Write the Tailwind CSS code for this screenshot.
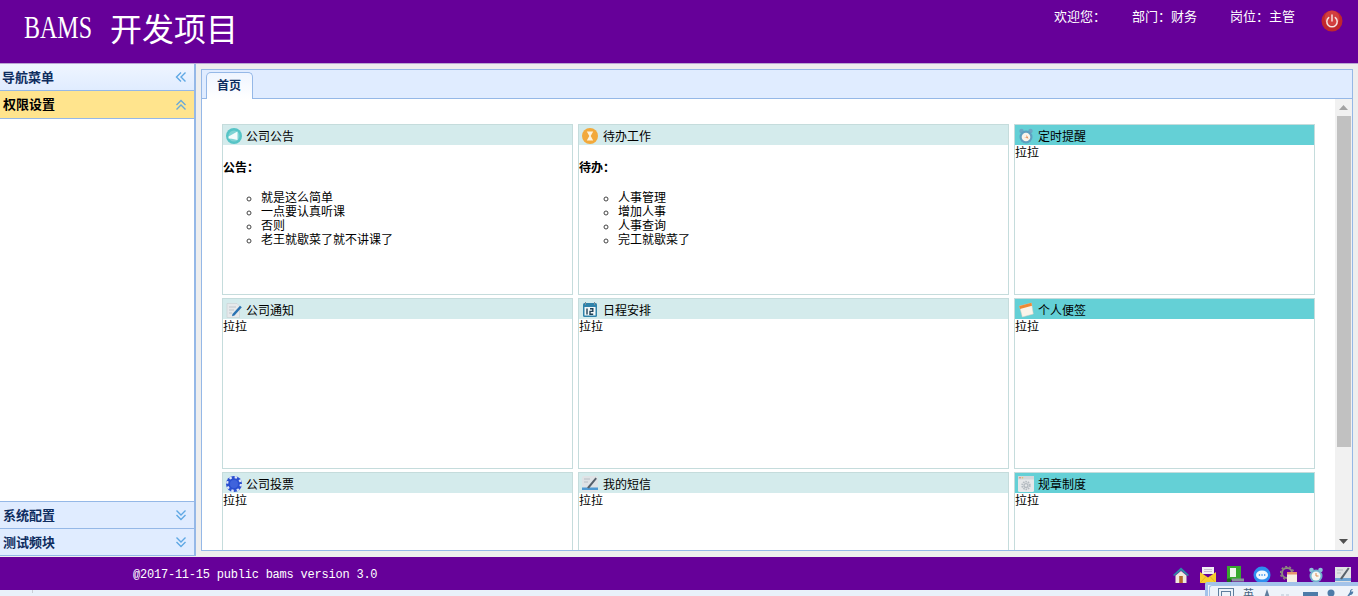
<!DOCTYPE html>
<html lang="zh">
<head>
<meta charset="utf-8">
<title>BAMS 开发项目</title>
<script src="https://cdn.jsdelivr.net/npm/@tailwindcss/browser@4"></script>
</head>
<body class="h-[596px] w-[1358px] overflow-hidden bg-[#eeeeee] font-['Liberation_Sans','Noto_Sans_CJK_SC',sans-serif] text-[12px] leading-[14px] text-black">
<div class="flex h-[596px] flex-col overflow-hidden">

  <!-- header -->
  <header class="relative flex h-[64px] shrink-0 items-start border-b border-[#b9a6d3] bg-[#660099] text-white">
    <h1 class="ml-[24px] mt-[8px] flex items-center text-[32px] leading-[38px] font-normal">
      <span class="inline-block w-[68px] origin-left scale-x-[0.75] font-['Liberation_Serif',serif]">BAMS</span>
      <span class="ml-[18px] font-['Noto_Sans_CJK_SC',sans-serif] font-normal">开发项目</span>
    </h1>
    <div class="ml-auto mt-[9px] flex text-[13px] leading-[15px]">
      <span class="w-[78px]">欢迎您：</span>
      <span class="w-[98px]">部门：财务</span>
      <span class="w-[91px]">岗位：主管</span>
    </div>
    <svg class="mr-[15px] mt-[10px] h-[22px] w-[22px]" viewBox="0 0 22 22">
      <circle cx="11" cy="11" r="10.5" fill="#c0272d"/>
      <circle cx="11" cy="8" r="7.5" fill="#e0524f" opacity=".55"/>
      <path d="M7.7 7.6a5.2 5.2 0 1 0 6.6 0" fill="none" stroke="#f6e3e0" stroke-width="1.5" stroke-linecap="round"/>
      <path d="M11 5v6" stroke="#f6e3e0" stroke-width="1.5" stroke-linecap="round"/>
    </svg>
  </header>

  <!-- middle -->
  <div class="flex h-[493px] shrink-0">
    <!-- sidebar -->
    <aside class="flex h-[492px] w-[196px] shrink-0 flex-col border-r-2 border-[#95b8e7] bg-white font-bold text-[13px] leading-[15px]">
      <div class="flex h-[27px] shrink-0 items-center justify-between border-b border-[#95b8e7] bg-gradient-to-b from-[#eff5ff] to-[#e0ecff] pl-[2px] pr-[7px] text-[#0e2d5f]">
        <span>导航菜单</span>
        <svg class="h-[12px] w-[12px]" viewBox="0 0 12 12" fill="none" stroke="#5fa8e4" stroke-width="1.4"><path d="M6 1.5 1.5 6 6 10.5M10.5 1.5 6 6l4.5 4.5"/></svg>
      </div>
      <div class="flex h-[28px] shrink-0 items-center justify-between border-b border-[#95b8e7] bg-[#ffe48d] pl-[3px] pr-[7px] text-black">
        <span>权限设置</span>
        <svg class="h-[12px] w-[12px]" viewBox="0 0 12 12" fill="none" stroke="#6aa9d8" stroke-width="1.4"><path d="M1.5 6 6 1.5 10.5 6M1.5 10.5 6 6l4.5 4.5"/></svg>
      </div>
      <div class="flex-1 bg-white"></div>
      <div class="flex h-[28px] shrink-0 items-center justify-between border-y border-[#95b8e7] bg-[#e0ecff] pl-[3px] pr-[7px] text-[#0e2d5f]">
        <span>系统配置</span>
        <svg class="h-[12px] w-[12px]" viewBox="0 0 12 12" fill="none" stroke="#5fa8e4" stroke-width="1.4"><path d="M1.5 1.5 6 6l4.5-4.5M1.5 6 6 10.5 10.5 6"/></svg>
      </div>
      <div class="flex h-[27px] shrink-0 items-center justify-between border-b border-[#95b8e7] bg-[#e0ecff] pl-[3px] pr-[7px] text-[#0e2d5f]">
        <span>测试频块</span>
        <svg class="h-[12px] w-[12px]" viewBox="0 0 12 12" fill="none" stroke="#5fa8e4" stroke-width="1.4"><path d="M1.5 1.5 6 6l4.5-4.5M1.5 6 6 10.5 10.5 6"/></svg>
      </div>
    </aside>

    <!-- main panel -->
    <main class="ml-[5px] mt-[5px] flex h-[482px] w-[1152px] flex-col border border-[#95b8e7] bg-white">
      <div class="flex h-[29px] shrink-0 items-end border-b border-[#95b8e7] bg-[#e0ecff] pl-[4px]">
        <div class="relative top-px flex h-[27px] w-[47px] items-center justify-center rounded-t-[5px] border border-b-0 border-[#95b8e7] bg-gradient-to-b from-[#eff5ff] to-white pr-[1px] text-[12px] font-bold text-[#0e2d5f]">首页</div>
      </div>
      <div class="flex min-h-0 flex-1">
        <div class="min-w-0 flex-1 overflow-hidden pl-[20px] pt-[25px]">
          <div class="grid grid-cols-[351px_431px_301px] grid-rows-[171px_171px_171px] gap-x-[5px] gap-y-[3px]">

            <section class="border border-[#c5dcdc]">
              <div class="flex h-[20px] items-center gap-[4px] bg-[#d4ebec] pl-[3px] pt-[2px]">
                <svg class="h-[16px] w-[16px]" viewBox="0 0 16 16"><circle cx="8" cy="8" r="8" fill="#56c4c6"/><circle cx="8" cy="8" r="5.500" fill="#7fd3d4"/><path d="M2.500 8.500 11.500 3.500v8.500L5.800 10.800 2.500 10.500z" fill="#f4fbfb"/></svg>
                <span class="pt-[1px]">公司公告</span>
              </div>
              <p class="mt-[16px] font-bold">公告：</p>
              <ul class="mt-[16px] list-[circle] pl-[38px] marker:text-[#444]">
                <li>就是这么简单</li><li>一点要认真听课</li><li>否则</li><li>老王就歇菜了就不讲课了</li>
              </ul>
            </section>

            <section class="border border-[#c5dcdc]">
              <div class="flex h-[20px] items-center gap-[5px] bg-[#d4ebec] pl-[3px] pt-[2px]">
                <svg class="h-[16px] w-[16px]" viewBox="0 0 16 16"><circle cx="8" cy="8" r="8" fill="#f2a93b"/><path d="M4.800 3.500h6.400L8.700 8l2.500 4.500H4.800L7.300 8z" fill="#fdf3dc"/></svg>
                <span class="pt-[1px]">待办工作</span>
              </div>
              <p class="mt-[16px] font-bold">待办：</p>
              <ul class="mt-[16px] list-[circle] pl-[39px] marker:text-[#444]">
                <li>人事管理</li><li>增加人事</li><li>人事查询</li><li>完工就歇菜了</li>
              </ul>
            </section>

            <section class="border border-[#c5dcdc]">
              <div class="flex h-[20px] items-center gap-[4px] bg-[#64d0d6] pl-[3px] pt-[2px]">
                <svg class="h-[16px] w-[16px]" viewBox="0 0 16 16"><circle cx="3.500" cy="3" r="2.200" fill="#6ea6c4"/><circle cx="12.500" cy="3" r="2.200" fill="#6ea6c4"/><circle cx="8" cy="9" r="6.500" fill="#5f9fc0"/><circle cx="8" cy="9" r="4.300" fill="#fbf3ea"/><path d="M6 9.500h2.500V7l2 3.500z" fill="#e08a50"/></svg>
                <span class="pt-[1px]">定时提醒</span>
              </div>
              <p class="pt-[1px]">拉拉</p>
            </section>

            <section class="border border-[#c5dcdc]">
              <div class="flex h-[20px] items-center gap-[4px] bg-[#d4ebec] pl-[3px] pt-[2px]">
                <svg class="h-[16px] w-[16px]" viewBox="0 0 16 16"><path d="M1 1.500h10l2.500 2.500v11.500H1z" fill="#e6e9eb" stroke="#c9ced2" stroke-width=".6"/><path d="M3 5h7M3 8h5M3 11h3" stroke="#bfc5ca"/><path d="M6.500 12 14 3.800l1.800 1.500L8.500 13.500 6 14.300z" fill="#2a72b2"/></svg>
                <span class="pt-[1px]">公司通知</span>
              </div>
              <p class="pt-[1px]">拉拉</p>
            </section>

            <section class="border border-[#c5dcdc]">
              <div class="flex h-[20px] items-center gap-[5px] bg-[#d4ebec] pl-[3px] pt-[2px]">
                <svg class="h-[16px] w-[16px]" viewBox="0 0 16 16"><rect x="1" y="1" width="14" height="14" rx="1.500" fill="#2f83ab"/><rect x="2.500" y="5" width="11" height="8.500" fill="#f3f7f8"/><path d="M3.500 0v3M12.500 0v3" stroke="#7c8f99"/><path d="M5 6.500v6M8 6.800h2.800v2.600H8v2.800h3.200" fill="none" stroke="#1e3f55" stroke-width="1.400"/></svg>
                <span class="pt-[1px]">日程安排</span>
              </div>
              <p class="pt-[1px]">拉拉</p>
            </section>

            <section class="border border-[#c5dcdc]">
              <div class="flex h-[20px] items-center gap-[4px] bg-[#64d0d6] pl-[3px] pt-[2px]">
                <svg class="h-[16px] w-[16px]" viewBox="0 0 16 16"><path d="m1.500 4 12-3 1.800 11-11 3z" fill="#fbf4ea" stroke="#d9d0c2" stroke-width=".5"/><path d="m1.200 4 12.300-3.200.5 3L2 7z" fill="#ee8a35"/></svg>
                <span class="pt-[1px]">个人便签</span>
              </div>
              <p class="pt-[1px]">拉拉</p>
            </section>

            <section class="border border-[#c5dcdc]">
              <div class="flex h-[20px] items-center gap-[4px] bg-[#d4ebec] pl-[3px] pt-[2px]">
                <svg class="h-[16px] w-[16px]" viewBox="0 0 16 16"><circle cx="8" cy="8" r="8" fill="#2a4fd0"/><circle cx="8" cy="8" r="6.900" fill="none" stroke="#dfe6fa" stroke-width="2.200" stroke-dasharray="2.500 3"/><circle cx="8" cy="8" r="4" fill="#3f63dc"/></svg>
                <span class="pt-[1px]">公司投票</span>
              </div>
              <p class="pt-[1px]">拉拉</p>
            </section>

            <section class="border border-[#c5dcdc]">
              <div class="flex h-[20px] items-center gap-[5px] bg-[#d4ebec] pl-[3px] pt-[2px]">
                <svg class="h-[16px] w-[16px]" viewBox="0 0 16 16"><rect width="16" height="16" rx="2" fill="#dfe3e6"/><rect y="11.500" width="16" height="2.500" fill="#4f9ad2"/><path d="M5 11.500 13.500 1.500l1.400 1.200L7 12.500z" fill="#55606b"/><path d="M2 3h6M2 6h4" stroke="#b7bec4"/></svg>
                <span class="pt-[1px]">我的短信</span>
              </div>
              <p class="pt-[1px]">拉拉</p>
            </section>

            <section class="border border-[#c5dcdc]">
              <div class="flex h-[20px] items-center gap-[4px] bg-[#64d0d6] pl-[3px] pt-[2px]">
                <svg class="h-[16px] w-[16px]" viewBox="0 0 16 16"><rect width="16" height="16" rx="1.500" fill="#e6e8ea"/><rect width="16" height="3.500" fill="#d4d7da"/><circle cx="2" cy="1.700" r=".8" fill="#e0795f"/><circle cx="4.500" cy="1.700" r=".8" fill="#e6bf5c"/><circle cx="8" cy="9.500" r="3.800" fill="none" stroke="#b4bbc1" stroke-width="1.800" stroke-dasharray="1.500 .9"/><circle cx="8" cy="9.500" r="2.600" fill="#b4bbc1"/><circle cx="8" cy="9.500" r="1.200" fill="#e6e8ea"/></svg>
                <span class="pt-[1px]">规章制度</span>
              </div>
              <p class="pt-[1px]">拉拉</p>
            </section>
          </div>
        </div>
        <!-- scrollbar -->
        <div class="flex w-[17px] shrink-0 flex-col items-center bg-[#f1f1f1]">
          <svg class="mt-[6px] h-[5px] w-[9px] shrink-0" viewBox="0 0 9 5"><path d="M4.500 0 9 5H0z" fill="#a3a3a3"/></svg>
          <div class="mt-[6px] h-[331px] w-[14px] shrink-0 bg-[#c1c1c1]"></div>
          <svg class="mt-auto mb-[6px] h-[5px] w-[9px] shrink-0" viewBox="0 0 9 5"><path d="M0 0h9L4.500 5z" fill="#505050"/></svg>
        </div>
      </div>
    </main>
  </div>

  <!-- footer -->
  <footer class="flex h-[33px] shrink-0 items-center bg-[#660099] text-white">
    <span class="ml-[133px] pt-[2px] font-['Liberation_Mono',monospace] text-[12px] tracking-[-0.22px]">@2017-11-15 public bams version 3.0</span>
    <div class="ml-auto mr-[6px] mt-[3px] flex gap-[9px]">
      <svg class="h-[18px] w-[18px]" viewBox="0 0 18 18"><path d="M1 9 9 1.500 17 9l-1.200 1L9 4.500 2.200 10z" fill="#2c8aa5"/><path d="M3.500 9.500 9 5l5.500 4.500V17h-11z" fill="#efe9dd"/><rect x="7.200" y="10" width="3.600" height="7" fill="#b4692d"/></svg>
      <svg class="h-[18px] w-[18px]" viewBox="0 0 18 18"><path d="M3 8V1h12v7z" fill="#f1eef3"/><path d="M5 3.500h8M5 5.500h8" stroke="#c9bfd0"/><path d="M1 6l8 5.500L17 6v11H1z" fill="#f8ce2e"/><path d="M1 17l6-6.500M17 17l-6-6.500" stroke="#e0a81c" stroke-width=".8"/></svg>
      <svg class="h-[18px] w-[18px]" viewBox="0 0 18 18"><rect x="1" y="0" width="14" height="14" fill="#37a82e"/><rect x="4" y="2" width="6" height="9" fill="#f0f6ee"/><rect x="6" y="12.500" width="12" height="3" fill="#8a949a"/><circle cx="3" cy="14.500" r="2.300" fill="#1f6e1c"/></svg>
      <svg class="h-[18px] w-[18px]" viewBox="0 0 18 18"><circle cx="9" cy="9" r="8.500" fill="#2e8fef"/><ellipse cx="9" cy="9" rx="6" ry="4.500" fill="#f2f8fe"/><path d="M5.800 9h1.300M8.400 9h1.300M11 9h1.300" stroke="#2e8fef" stroke-width="1.400"/></svg>
      <svg class="h-[18px] w-[18px]" viewBox="0 0 18 18"><circle cx="7" cy="7" r="5" fill="none" stroke="#8d8a7d" stroke-width="2"/><circle cx="7" cy="7" r="6.500" fill="none" stroke="#8d8a7d" stroke-width="1.500" stroke-dasharray="2 2"/><rect x="7" y="6" width="10" height="10" fill="#f7efe2"/><rect x="7" y="6" width="10" height="2.500" fill="#e5936f"/></svg>
      <svg class="h-[18px] w-[18px]" viewBox="0 0 18 18"><circle cx="4.500" cy="4" r="2.300" fill="#8ec1da"/><circle cx="13.500" cy="4" r="2.300" fill="#8ec1da"/><circle cx="9" cy="10" r="6.500" fill="#72b2cf"/><circle cx="9" cy="10" r="4.500" fill="#f6f7f2"/><path d="M9 7v3h2.500" fill="none" stroke="#d98a52"/></svg>
      <svg class="h-[18px] w-[18px]" viewBox="0 0 18 18"><rect x="1" y="1" width="16" height="16" fill="#e0e2e4"/><rect x="1" y="12" width="16" height="3" fill="#6ea5d6"/><path d="M6 12.500 14 1.500l1.500 1L8 13.500z" fill="#59626b"/><path d="M3 4h6M3 7h4" stroke="#b5bcc2"/></svg>
    </div>
  </footer>

  <div class="flex-1 bg-[#e9f1fa] pl-[32px]"><div class="h-[3px] w-px bg-[#c9ced6]"></div></div>
</div>

<!-- input-method toolbar lying over the page corner -->
<div class="absolute left-[1205px] top-[582px] h-[14px] w-[153px] rounded-tl-[3px] border-l-[3px] border-t-[3px] border-[#a3c3ea] bg-[#eef3fa]">
  <div class="ml-[1px] flex h-full items-start gap-[9px] rounded-tl-[3px] border-l border-t border-[#a3c3ea] pl-[8px] pt-[2px]">
    <svg class="h-[12px] w-[16px] shrink-0" viewBox="0 0 16 12" fill="none" stroke="#5f7f9f"><rect x=".5" y=".5" width="15" height="14"/><rect x="3.500" y="3.500" width="9" height="9"/></svg>
    <span class="text-[11px] leading-[12px] text-[#47617c]">英</span>
    <svg class="h-[10px] w-[8px] shrink-0" viewBox="0 0 8 10"><path d="M4 1 7 10H1z" fill="#5f7f9f"/></svg>
    <svg class="h-[10px] w-[14px] shrink-0" viewBox="0 0 14 10"><path d="M1 7h3M6 7h3" stroke="#b6c3d1"/></svg>
    <svg class="h-[10px] w-[15px] shrink-0" viewBox="0 0 15 10"><rect y="4" width="15" height="6" fill="#4d7ba8"/></svg>
    <svg class="h-[10px] w-[8px] shrink-0" viewBox="0 0 8 10"><circle cx="4" cy="5" r="3.500" fill="#4d7ba8"/></svg>
    <svg class="h-[10px] w-[10px] shrink-0" viewBox="0 0 10 10"><path d="M2 10 6 4a2.500 2.500 0 0 1 3-3L7 3l1 1 1-1a3 3 0 0 1-3 4l-2 3z" fill="#4d7ba8"/></svg>
  </div>
</div>
</body>
</html>
